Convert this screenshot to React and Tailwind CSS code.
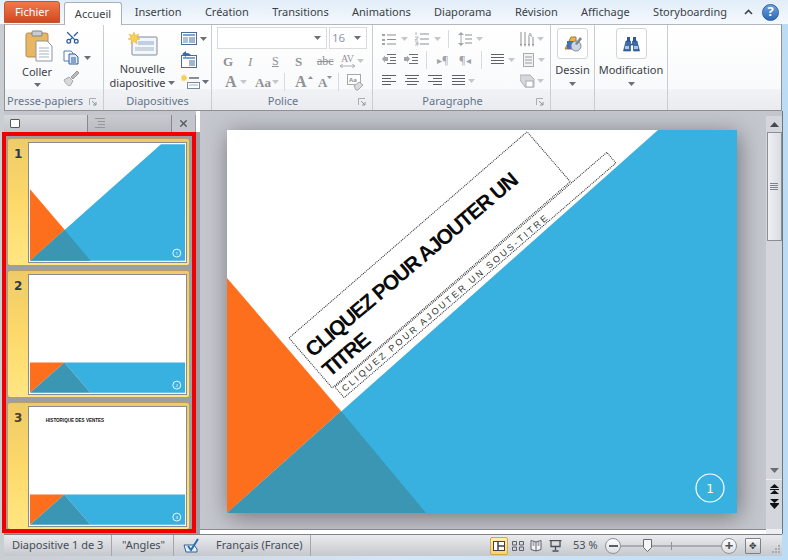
import { Scissors, X } from "lucide-react"

const Caret = ({ className = "" }) => (
  <svg width="7" height="4" viewBox="0 0 7 4" className={className}>
    <path d="M0 0h7L3.5 4z" fill="#6b6f76" />
  </svg>
)

const FadedCaret = ({ className = "" }) => (
  <svg width="7" height="4" viewBox="0 0 7 4" className={className}>
    <path d="M0 0h7L3.5 4z" fill="#c4c6ca" />
  </svg>
)

// horizontal line glyphs used by the paragraph buttons
const Lines = ({ rows, w = 14, dark = false }) => (
  <svg width={w} height="12" viewBox={`0 0 ${w} 12`}>
    {rows.map((r, i) => (
      <rect key={i} x={r[0]} y={i * (12 / rows.length)} width={r[1]} height="1" fill={dark ? "#5d6064" : "#94969a"} />
    ))}
  </svg>
)

const BulletIcon = () => (
  <svg width="14" height="13" viewBox="0 0 14 13">
    <path d="M0 1h3v2H0zM0 6h3v2H0zM0 10h3v2H0z" fill="#a3a5a9" />
    <path d="M5 2h9M5 6.500h9M5 11h9" stroke="#8d8f93" />
  </svg>
)

const NumberIcon = () => (
  <svg width="14" height="14" viewBox="0 0 14 14">
    <path d="M1 0v3M0 5h3v1l-3 2h3M0 10h3v3H0M1 11.500h2" stroke="#a3a5a9" fill="none" strokeWidth=".8" />
    <path d="M5 2h9M5 7h9M5 12h9" stroke="#8d8f93" />
  </svg>
)

const SpacingIcon = () => (
  <svg width="14" height="14" viewBox="0 0 14 14">
    <path d="M3 0L0 3h6zM3 14L0 11h6zM2.500 3h1v8h-1z" fill="#a3a5a9" />
    <path d="M7 3h7M7 7h7M7 11h7" stroke="#8d8f93" />
  </svg>
)

const DirectionIcon = () => (
  <svg width="15" height="15" viewBox="0 0 15 15">
    <path d="M1 0v13M5 0v13M9 5v8M13 5v8" stroke="#8d8f93" />
    <path d="M0 12h2l-1 3zM4 12h2l-1 3zM8 12h2l-1 3zM12 12h2l-1 3z" fill="#8d8f93" />
    <text x="8" y="5" fontSize="6" fontWeight="700" fill="#a3a5a9">A</text>
  </svg>
)

const IndentIcon = ({ flip }) => (
  <svg width="14" height="12" viewBox="0 0 14 12">
    <path d="M5 .5h9M8 3.500h6M8 6.500h6M5 9.500h9" stroke="#6a6d71" />
    <path d={flip ? "M0 3h3V1.500L6 5 3 8.500V7H0z" : "M6 3H3V1.500L0 5l3 3.500V7h3z"} fill="#a3a5a9" />
  </svg>
)

const LauncherIcon = () => (
  <svg width="8" height="8" viewBox="0 0 8 8" className="absolute right-[6px] bottom-[4px]">
    <path d="M.5 7V.5H7" fill="none" stroke="#a9adb3" />
    <path d="M3 3l4 4M7 4v3H4" fill="none" stroke="#8e949c" />
  </svg>
)

const Group = ({ label, width, children, launcher }) => (
  <div className={`relative flex flex-col shrink-0 border-r border-[#c9ccd1] ${width}`}>
    <div className="h-[64px] relative">{children}</div>
    <div className={`h-[21px] pt-[4px] flex items-center justify-center text-[11px] text-[#64748c] bg-gradient-to-b from-[#f1f3f6] to-[#e9ebef] ${launcher ? "pr-[18px]" : ""}`}>
      {label}
    </div>
    {launcher && <LauncherIcon />}
  </div>
)

const ClipboardIcon = () => (
  <svg width="28" height="32" viewBox="0 0 28 32">
    <rect x="1" y="3" width="22" height="24" rx="2" fill="#e9b664" stroke="#b48a4e" />
    <rect x="7" y="1" width="10" height="5" rx="1" fill="#c9cdd2" stroke="#7f8589" />
    <path d="M11 11h11l5 5v15H11z" fill="#fff" stroke="#8d97a5" />
    <path d="M14 18h10M14 21h10M14 24h10M14 27h10" stroke="#a9b3c0" />
  </svg>
)

const CopyIcon = () => (
  <svg width="16" height="15" viewBox="0 0 16 15">
    <path d="M1 1h7l2 2v8H1z" fill="#fff" stroke="#4f7fb4" />
    <path d="M6 4h6l3 3v7H6z" fill="#dfeaf7" stroke="#2f5f98" />
    <path d="M8 8h5M8 10h5M8 12h5" stroke="#2f5f98" />
  </svg>
)

const BrushIcon = () => (
  <svg width="17" height="16" viewBox="0 0 17 16">
    <path d="M1 10l5-3 4 4-3 5c-2 0-5-3-6-6z" fill="#d7d8da" stroke="#a6a8ab" />
    <path d="M8 7l6-6 2 2-6 6z" fill="#b8babd" stroke="#96989b" />
  </svg>
)

const NewSlideIcon = () => (
  <svg width="30" height="24" viewBox="0 0 30 24">
    <rect x="4" y="5" width="25" height="18" rx="1" fill="#f3f6fa" stroke="#7c8ba0" />
    <rect x="10" y="9" width="16" height="4" fill="#bfd0e4" />
    <path d="M7 16h19M7 18h19" stroke="#a4b3c6" />
    <path d="M6 0l1.500 3.500L11 2 9 5.500 12 7 8.500 8 9 12 6 9.500 3 12l.5-4L0 7l3-1.500L1 2l3.500 1.500z" fill="#f6cf55" stroke="#e5a93a" strokeWidth=".5" />
  </svg>
)

const LayoutIcon = () => (
  <svg width="16" height="13" viewBox="0 0 16 13">
    <rect x=".5" y=".5" width="15" height="12" fill="#fff" stroke="#4a6d96" />
    <rect x="2" y="2" width="12" height="2" fill="#7ea3cc" />
    <rect x="2" y="5" width="5" height="6" fill="#a9c2dd" />
    <path d="M8 6h6M8 8h6M8 10h6" stroke="#4a6d96" />
  </svg>
)

const ResetIcon = () => (
  <svg width="16" height="17" viewBox="0 0 16 17">
    <rect x=".5" y="4.500" width="15" height="12" fill="#fff" stroke="#4a6d96" />
    <rect x="2" y="6" width="12" height="2" fill="#7ea3cc" />
    <path d="M8 10h6M8 12h6M8 14h6" stroke="#4a6d96" />
    <path d="M1 3l4-3v2c3 0 5 1 5 3-1-1-3-1-5-1v2z" fill="#2f6cb3" />
  </svg>
)

const SectionIcon = () => (
  <svg width="20" height="15" viewBox="0 0 20 15">
    <path d="M3 0l1 2 2-1-1 2 2 1-2 1 1 2-2-1-1 2-1-2-2 1 1-2-2-1 2-1-1-2 2 1z" fill="#f6cf55" />
    <path d="M8 4h10" stroke="#8a8f96" strokeWidth="2" />
    <rect x="6.500" y="8.500" width="12" height="6" fill="#fff" stroke="#7c8ba0" />
    <path d="M8 11h9" stroke="#a4b3c6" />
  </svg>
)

const DrawIcon = () => (
  <svg width="20" height="19" viewBox="0 0 20 19">
    <path d="M2 15L8 3h5v12z" fill="#e6b251" stroke="#a87c30" />
    <rect x="4" y="7" width="9" height="8" fill="#3f73b5" />
    <circle cx="13" cy="12" r="5" fill="#cfd6df" stroke="#7f8b99" />
    <path d="M17 3l2 2-5 6-2-1z" fill="#7a8796" />
  </svg>
)

const BinocularsIcon = () => (
  <svg width="17" height="16" viewBox="0 0 17 16">
    <path d="M4 1h3v4H4zM10 1h3v4h-3z" fill="#2c5a94" />
    <path d="M3 5h4.500v3h2V5H14l2.500 10h-6V9h-3v6H.5z" fill="#3c6ba6" stroke="#1e4577" strokeWidth=".6" />
    <path d="M2 10h4v3H2zM11 10h4v3h-4z" fill="#a9c5e4" />
  </svg>
)

const LetterBtn = ({ children, className = "" }) => (
  <span className={`font-['Liberation_Serif',serif] text-[#8f9195] leading-none ${className}`}>{children}</span>
)

const Ribbon = () => (
  <div className="h-[87px] ml-[4px] mr-[6px] flex shrink-0 bg-gradient-to-b from-white to-[#f7f8fa] border-x border-[#8d9097] border-t border-t-[#b3b7bd] border-b border-b-[#8d9097]">
    <Group label="Presse-papiers" width="w-[99px]" launcher>
      <div className="flex">
        <div className="w-[58px] flex flex-col items-center pt-[5px] pl-[6px]">
          <div className="ml-[3px]"><ClipboardIcon /></div>
          <span className="text-[11px] text-[#3b3f46] mt-[3px] leading-[14px]">Coller</span>
          <Caret className="mt-[4px]" />
        </div>
        <div className="flex flex-col pt-[5px] gap-[5px]">
          <Scissors size={15} color="#2b5d9c" strokeWidth={2} className="-rotate-90 ml-[2px]" />
          <div className="flex items-center gap-[5px]"><CopyIcon /><Caret /></div>
          <BrushIcon />
        </div>
      </div>
    </Group>
    <Group label="Diapositives" width="w-[108px]">
      <div className="flex">
        <div className="w-[77px] flex flex-col items-center pt-[7px]">
          <NewSlideIcon />
          <span className="text-[11px] text-[#3b3f46] mt-[6px] leading-[14px]">Nouvelle</span>
          <span className="text-[11px] text-[#3b3f46] leading-[14px] flex items-center gap-[3px] whitespace-nowrap">diapositive <Caret /></span>
        </div>
        <div className="flex flex-col gap-[6px] pt-[7px]">
          <div className="flex items-center gap-[3px]"><LayoutIcon /><Caret /></div>
          <ResetIcon />
          <div className="flex items-center gap-[1px]"><SectionIcon /><Caret /></div>
        </div>
      </div>
    </Group>
    <Group label="Police" width="w-[161px]" launcher>
      <div className="pl-[5px] pt-[2px]">
        <div className="flex gap-[2px] h-[22px]">
          <div className="w-[110px] flex items-center justify-end pr-[5px] border border-[#d8dade] bg-white"><Caret /></div>
          <div className="w-[38px] flex items-center justify-between px-[2px] pr-[5px] border border-[#d8dade] bg-white text-[11.5px] text-[#8a99ad]">16<Caret /></div>
        </div>
        <div className="flex items-center h-[22px] mt-[1px] pl-[6px] text-[12px]">
          <LetterBtn className="font-bold w-[25px] text-[13px] font-['Liberation_Sans',sans-serif]">G</LetterBtn>
          <LetterBtn className="italic w-[24px] text-[13px]">I</LetterBtn>
          <LetterBtn className="underline w-[23px] font-['Liberation_Sans',sans-serif]">S</LetterBtn>
          <LetterBtn className="font-bold w-[22px] text-[13px]">S</LetterBtn>
          <LetterBtn className="line-through w-[23px] font-['Liberation_Sans',sans-serif]">abc</LetterBtn>
          <div className="flex flex-col items-center w-[15px] text-[10px] leading-[10px]">
            <LetterBtn>AV</LetterBtn>
            <svg width="15" height="4" viewBox="0 0 16 4"><path d="M0 2h16M3 0L0 2l3 2M13 0l3 2-3 2" stroke="#a8aaae" fill="none" /></svg>
          </div>
          <FadedCaret className="ml-[2px]" />
        </div>
        <div className="flex items-center h-[20px] pl-[8px]">
          <LetterBtn className="text-[16px] font-bold w-[14px]">A</LetterBtn>
          <FadedCaret className="ml-[1px] mr-[8px]" />
          <LetterBtn className="text-[13px] font-bold w-[17px]">Aa</LetterBtn>
          <FadedCaret className="mr-[5px]" />
          <span className="h-[18px] w-px bg-[#d8dade] mr-[10px]" />
          <LetterBtn className="text-[16px] font-bold w-[13px]">A</LetterBtn>
          <svg width="5" height="3" viewBox="0 0 5 3" className="mb-[10px] mr-[5px]"><path d="M0 3l2.500-3L5 3z" fill="#8f9195" /></svg>
          <LetterBtn className="text-[13px] font-bold w-[9px]">A</LetterBtn>
          <svg width="5" height="3" viewBox="0 0 5 3" className="mb-[10px] mr-[6px]"><path d="M0 0h5L2.500 3z" fill="#8f9195" /></svg>
          <span className="h-[18px] w-px bg-[#d8dade] mr-[8px]" />
          <svg width="17" height="17" viewBox="0 0 17 17">
            <rect x=".5" y=".5" width="13" height="10" fill="#fff" stroke="#a5a8ad" />
            <text x="2" y="8" fontSize="6" fill="#8d9096" fontWeight="700">Aa</text>
            <path d="M7 12l5-4 4 3-5 5H9z" fill="#d9dadd" stroke="#a5a8ad" />
          </svg>
        </div>
      </div>
    </Group>
    <Group label="Paragraphe" width="w-[178px]" launcher>
      <div className="pl-[9px]">
        <div className="flex items-center h-[24px] pt-[4px]">
          <BulletIcon />
          <FadedCaret className="ml-[5px] mr-[7px]" />
          <NumberIcon />
          <FadedCaret className="ml-[5px] mr-[7px]" />
          <span className="h-[18px] w-px bg-[#d8dade] mr-[9px]" />
          <SpacingIcon />
          <FadedCaret className="ml-[4px] mr-[37px]" />
          <DirectionIcon />
          <FadedCaret className="ml-[2px]" />
        </div>
        <div className="flex items-center h-[21px]">
          <IndentIcon />
          <span className="w-[8px]" />
          <IndentIcon flip />
          <span className="h-[18px] w-px bg-[#d8dade] mx-[8px]" />
          <span className="text-[10px] w-[12px] ml-[2px] text-[#a0a2a6] leading-none whitespace-nowrap">▸¶</span>
          <span className="w-[10px]" />
          <span className="text-[10px] w-[13px] text-[#a0a2a6] leading-none whitespace-nowrap">¶◂</span>
          <span className="h-[18px] w-px bg-[#d8dade] mx-[9px]" />
          <Lines w={13} rows={[[0, 13], [0, 13], [0, 13], [0, 13]]} dark />
          <FadedCaret className="ml-[4px] mr-[6px]" />
          <svg width="15" height="14" viewBox="0 0 15 14"><rect x="2.500" y=".5" width="10" height="13" fill="#f2f2f2" stroke="#a9abaf" /><path d="M4 4h7M4 7h7M4 10h7" stroke="#9b9da1" /></svg>
          <FadedCaret className="ml-[2px]" />
        </div>
        <div className="flex items-center h-[22px]">
          <Lines w={14} rows={[[0, 14], [0, 9], [0, 14], [0, 9]]} dark />
          <span className="w-[9px]" />
          <Lines w={14} rows={[[0, 14], [2, 10], [0, 14], [2, 10]]} dark />
          <span className="w-[9px]" />
          <Lines w={14} rows={[[0, 14], [5, 9], [0, 14], [5, 9]]} dark />
          <span className="w-[10px]" />
          <Lines w={13} rows={[[0, 13], [0, 13], [0, 13], [0, 13]]} dark />
          <FadedCaret className="ml-[3px] mr-[45px]" />
          <svg width="15" height="14" viewBox="0 0 15 14"><path d="M0 1h10l4 4v8H5L0 6z" fill="#d6d7da" stroke="#b0b2b6" /><rect x="6" y="7" width="7" height="6" fill="#fff" stroke="#aaacb0" /></svg>
          <FadedCaret className="ml-[2px]" />
        </div>
      </div>
    </Group>
    <Group label="" width="w-[44px]">
      <div className="flex flex-col items-center pt-[3px]">
        <div className="w-[31px] h-[31px] flex items-center justify-center border border-[#d3d5d9] rounded-[3px] bg-white"><DrawIcon /></div>
        <span className="text-[11px] text-[#3b3f46] mt-[4px] leading-[14px]">Dessin</span>
        <Caret className="mt-[5px]" />
      </div>
    </Group>
    <Group label="" width="w-[73px]">
      <div className="flex flex-col items-center pt-[3px]">
        <div className="w-[31px] h-[31px] flex items-center justify-center border border-[#d3d5d9] rounded-[3px] bg-white"><BinocularsIcon /></div>
        <span className="text-[11px] text-[#3b3f46] mt-[4px] leading-[14px] whitespace-nowrap">Modification</span>
        <Caret className="mt-[5px]" />
      </div>
    </Group>
    <div className="flex-1 flex flex-col">
      <div className="h-[64px]" />
      <div className="h-[21px] bg-gradient-to-b from-[#f1f3f6] to-[#e9ebef]" />
    </div>
  </div>
)

// the "Angles" theme drawn on a 510x383 canvas, used by the big slide and the thumbnails
const TitleArt = () => (
  <>
    <path d="M431 0H510V383H0z" fill="#38b1e0" />
    <path d="M0 148V383L114 281z" fill="#fd6f1c" />
    <path d="M0 383L114 281L199 383z" fill="#3b96b4" />
  </>
)

const BandArt = () => (
  <>
    <path d="M113 284H510V383H199z" fill="#38b1e0" />
    <path d="M0 284H113L0 383z" fill="#fd6f1c" />
    <path d="M0 383L113 284L199 383z" fill="#3b96b4" />
  </>
)

const Thumb = ({ n, band, title, active }) => (
  <div className="h-[128px] flex border border-[#b99e5f] rounded-[3px] bg-gradient-to-b from-[#eecb68] via-[#fdd96a] to-[#ffe682]">
    <div className={`w-[20px] pl-[6px] pt-[6px] text-[12px] font-bold font-['DejaVu_Sans',sans-serif] ${active ? "text-[#2d3a4d]" : "text-[#4a4030]"}`}>{n}</div>
    <div className="w-[159px] h-[121px] mt-[3px] border border-[#868b94] bg-white p-[1px]">
      <svg viewBox="0 0 510 383" className="w-full h-full block">
        {band ? <BandArt /> : <TitleArt />}
        {title && <text x="52" y="45" fontSize="15" fontWeight="700" fill="#111" className="font-['Liberation_Sans',sans-serif]">{title}</text>}
        <circle cx="483" cy="358" r="13" fill="none" stroke="#fff" strokeWidth="3" />
        <text x="483" y="363" fontSize="14" textAnchor="middle" fill="#fff">{n}</text>
      </svg>
    </div>
  </div>
)

const SidePane = () => (
  <div className="w-[196px] shrink-0 ml-[4px] flex flex-col bg-[#9a9ea5] relative">
    <div className="h-[21px] flex items-end bg-[#c3c6cc] shrink-0">
      <div className="w-[84px] h-[17px] flex items-center pl-[6px] border-r border-[#85888e] bg-gradient-to-b from-[#d6d8dc] to-[#c2c5ca]">
        <span className="w-[10px] h-[9px] bg-white border border-[#55585e] rounded-[1px]" />
      </div>
      <div className="w-[84px] h-[17px] flex items-center pl-[6px] border-r border-[#85888e] bg-gradient-to-b from-[#c8cacf] to-[#b8bbc1]">
        <Lines w={11} rows={[[1, 10], [4, 7], [4, 7], [1, 10]]} />
      </div>
      <div className="flex-1 h-[17px] flex items-center justify-center bg-[#c3c6cc] border-r border-[#9a9da3]">
        <X size={11} strokeWidth={3} color="#55585e" />
      </div>
      <div className="w-[4px] h-[21px] bg-white" />
    </div>
    <div className="flex-1 flex flex-col gap-[4px] pl-[3px] pr-[10px] pt-[6px]">
      <Thumb n="1" active />
      <Thumb n="2" band active />
      <Thumb n="3" band title="HISTORIQUE DES VENTES" />
    </div>
    <div className="absolute left-[-2px] top-[21px] w-[194px] h-[401px] border-[4px] border-[#f00000]" />
  </div>
)

const MainSlide = () => (
  <div className="w-[510px] h-[383px] ml-[27px] mt-[19px] shrink-0 bg-white shadow-[2px_4px_22px_rgba(60,60,65,0.6)]">
    <svg viewBox="0 0 510 383" width="510" height="383" className="block">
      <TitleArt />
      <rect x="0" y="0" width="315" height="66" transform="translate(62 208) rotate(-40.900)" fill="none" stroke="#222" strokeDasharray="1 1" />
      <rect x="0" y="0" width="359" height="14" transform="translate(108 257) rotate(-40.800)" fill="none" stroke="#222" strokeDasharray="1 1" />
      <g transform="translate(86 228) rotate(-40.400)" className="font-['Liberation_Sans',sans-serif]">
        <text x="0" y="0" fontSize="21" fontWeight="700" fill="#0a0a0a" letterSpacing="-1.300">CLIQUEZ POUR AJOUTER UN</text>
        <text x="0" y="26" fontSize="21" fontWeight="700" fill="#0a0a0a" letterSpacing="-1.300">TITRE</text>
      </g>
      <text transform="translate(118 262) rotate(-40.400)" fontSize="9" letterSpacing="2.500" fill="#333" className="font-['Liberation_Sans',sans-serif]">CLIQUEZ POUR AJOUTER UN SOUS-TITRE</text>
      <circle cx="483" cy="358" r="14" fill="none" stroke="#fff" strokeWidth="1.200" />
      <text x="483" y="363" fontSize="12" textAnchor="middle" fill="#fff" className="font-['DejaVu_Sans',sans-serif]">1</text>
    </svg>
  </div>
)

const ScrollBar = () => (
  <div className="w-[16px] shrink-0 flex flex-col items-center bg-[#d3d6db]">
    <div className="h-[5px] w-full bg-[#c3c6cc]" />
    <div className="h-[16px] flex items-center justify-center">
      <svg width="9" height="5" viewBox="0 0 9 5"><path d="M0 5L4.500 0 9 5z" fill="#45494f" /></svg>
    </div>
    <div className="w-[15px] h-[109px] flex flex-col items-center justify-center gap-[1px] border border-[#8a8e95] bg-gradient-to-r from-[#eef0f3] to-[#d9dce1]">
      <span className="w-[8px] h-px bg-[#7f848b]" />
      <span className="w-[8px] h-px bg-[#7f848b]" />
      <span className="w-[8px] h-px bg-[#7f848b]" />
      <span className="w-[8px] h-px bg-[#7f848b]" />
    </div>
    <div className="flex-1" />
    <div className="h-[18px] flex items-center justify-center">
      <svg width="9" height="5" viewBox="0 0 9 5"><path d="M0 0L4.500 5 9 0z" fill="#6a6e74" /></svg>
    </div>
    <div className="h-[50px] w-full flex flex-col items-center gap-[5px] pt-[4px] border-t border-[#eef0f3]">
      <svg width="9" height="10" viewBox="0 0 9 10"><path d="M0 4L4.500 0 9 4zM0 5h9v1H0zM0 10L4.500 6 9 10z" fill="#111" /></svg>
      <svg width="9" height="10" viewBox="0 0 9 10"><path d="M0 0h9L4.500 4zM0 4h9v1H0zM0 5h9L4.500 10z" fill="#111" /></svg>
    </div>
    <div className="h-[5px] w-full bg-[#eceef1]" />
  </div>
)

const StatusBar = () => (
  <div className="h-[22px] ml-[4px] mr-[6px] shrink-0 flex items-center text-[11px] text-[#474d58] bg-gradient-to-b from-[#e9ebee] to-[#c5c8cd] border-t border-[#7f838a]">
    <span className="w-[108px] pl-[8px] h-full flex items-center border-r border-[#a4a7ac] whitespace-nowrap">Diapositive 1 de 3</span>
    <span className="w-[62px] pl-[10px] h-full flex items-center border-r border-[#a4a7ac]">"Angles"</span>
    <span className="w-[137px] pl-[9px] h-full flex items-center border-r border-[#a4a7ac] whitespace-nowrap">
      <svg width="17" height="15" viewBox="0 0 17 15" className="mr-[16px] shrink-0">
        <path d="M1 7h10l3 4v3H3z" fill="#e6eef8" stroke="#31609c" />
        <path d="M5 8l3 4 7-11" fill="none" stroke="#2c6bb5" strokeWidth="2" />
      </svg>
      Français (France)
    </span>
    <div className="flex-1" />
    <div className="flex items-center h-full">
      <span className="w-[18px] h-[18px] flex items-center justify-center rounded-[2px] border border-[#d9a53f] bg-gradient-to-b from-[#ffeeb0] to-[#fbd368]">
        <svg width="12" height="10" viewBox="0 0 12 10"><rect x=".5" y=".5" width="11" height="9" fill="#fff" stroke="#3f444c" /><path d="M5 .5v9M5 5h6.500" stroke="#3f444c" strokeWidth="1.500" /></svg>
      </span>
      <svg width="12" height="10" viewBox="0 0 12 10" className="ml-[4px]"><path d="M.5.5h4v3.500h-4zM7.500.5h4v3.500h-4zM.5 6h4v3.500h-4zM7.500 6h4v3.500h-4z" fill="none" stroke="#5b6069" /></svg>
      <svg width="12" height="12" viewBox="0 0 12 12" className="ml-[6px]"><path d="M6 2L1 .5v9L6 11l5-1.500v-9zM6 2v9M2.500 3h2M2.500 5h2M7.500 3h2M7.500 5h2" fill="#f4f5f7" stroke="#5b6069" /></svg>
      <svg width="13" height="12" viewBox="0 0 13 12" className="ml-[7px]"><path d="M.5.5h12M2 .5v6h9v-6M6.500 7v3M3.500 11h6" fill="none" stroke="#4a4f57" strokeWidth="1.300" /></svg>
      <span className="ml-[11px] w-[24px] whitespace-nowrap text-[#4a4f5a]">53 %</span>
      <span className="ml-[8px] w-[16px] h-[16px] rounded-full border border-[#8f9399] bg-gradient-to-b from-white to-[#dcdee2] flex items-center justify-center"><span className="w-[9px] h-[2px] bg-[#5a5e65]" /></span>
      <div className="relative w-[100px] h-[2px] bg-[#a9acb1]">
        <span className="absolute left-[50px] -top-[3px] w-px h-[8px] bg-[#8f9399]" />
        <svg width="9" height="13" viewBox="0 0 9 13" className="absolute left-[22px] -top-[6px]"><path d="M.5.5h8v8l-4 4-4-4z" fill="#f4f5f7" stroke="#676b71" /></svg>
      </div>
      <span className="w-[16px] h-[16px] rounded-full border border-[#8f9399] bg-gradient-to-b from-white to-[#dcdee2] flex items-center justify-center text-[#4f5359] text-[15px] font-bold leading-none">+</span>
      <span className="ml-[8px] w-[16px] h-[16px] border border-[#7e8288] rounded-[1px] bg-gradient-to-b from-[#fafafa] to-[#c4c6cb] flex items-center justify-center text-[9px] text-[#33363b] leading-none">✥</span>
      <svg width="12" height="12" viewBox="0 0 12 12" className="ml-[9px] self-end"><path d="M8 1h2v2H8zM5 4h2v2H5zM8 4h2v2H8zM2 7h2v2H2zM5 7h2v2H5zM8 7h2v2H8z" fill="#a7aab0" /></svg>
    </div>
  </div>
)

const tabs = ["Insertion", "Création", "Transitions", "Animations", "Diaporama", "Révision", "Affichage", "Storyboarding"]

export default function App() {
  return (
    <div className="w-[788px] h-[560px] flex flex-col overflow-hidden font-['Noto_Sans',sans-serif] bg-gradient-to-r from-[#c9ced3] via-[#d6e6f5] to-[#bcdcf6]">
      <div className="h-[24px] flex items-end shrink-0 pl-[4px] bg-gradient-to-b from-[#e1edf8] to-[#f5f9fd]">
        <div className="shrink-0 w-[56px] h-[22px] mb-[1px] flex items-center justify-center rounded-t-[3px] text-[11px] text-white bg-gradient-to-b from-[#ee7a4b] to-[#d2481f] border border-[#c5552e]">Fichier</div>
        <div className="shrink-0 ml-[4px] w-[58px] h-[23px] -mb-[1px] flex items-center justify-center rounded-t-[3px] text-[11px] text-[#3b3f46] bg-white border border-[#aab0b8] border-b-0 relative z-10">Accueil</div>
        <div className="flex items-center h-[24px] pl-[1px] text-[11px] text-[#3b3f46]">
          {tabs.map((t) => (
            <span key={t} className="px-[11.7px] whitespace-nowrap">{t}</span>
          ))}
        </div>
        <div className="flex-1" />
        <div className="flex items-center h-[24px] pr-[9px] gap-[9px]">
          <svg width="9" height="6" viewBox="0 0 9 6"><path d="M1 5l3.500-3.500L8 5" fill="none" stroke="#3f444c" strokeWidth="1.600" /></svg>
          <span className="w-[17px] h-[17px] rounded-full flex items-center justify-center text-white text-[13px] font-bold bg-gradient-to-b from-[#6da3e0] to-[#2f68b8] border border-[#2b5f9f]">?</span>
        </div>
      </div>
      <Ribbon />
      <div className="h-[423px] flex shrink-0">
        <SidePane />
        <div className="flex-1 flex flex-col bg-[#c4c7cd] overflow-hidden">
          <MainSlide />
          <div className="flex-1" />
          <div className="h-[5px] bg-white border-t border-[#888c92] relative" />
        </div>
        <ScrollBar />
        <div className="w-[6px] border-l border-[#6f7680]" />
      </div>
      <StatusBar />
    </div>
  )
}
